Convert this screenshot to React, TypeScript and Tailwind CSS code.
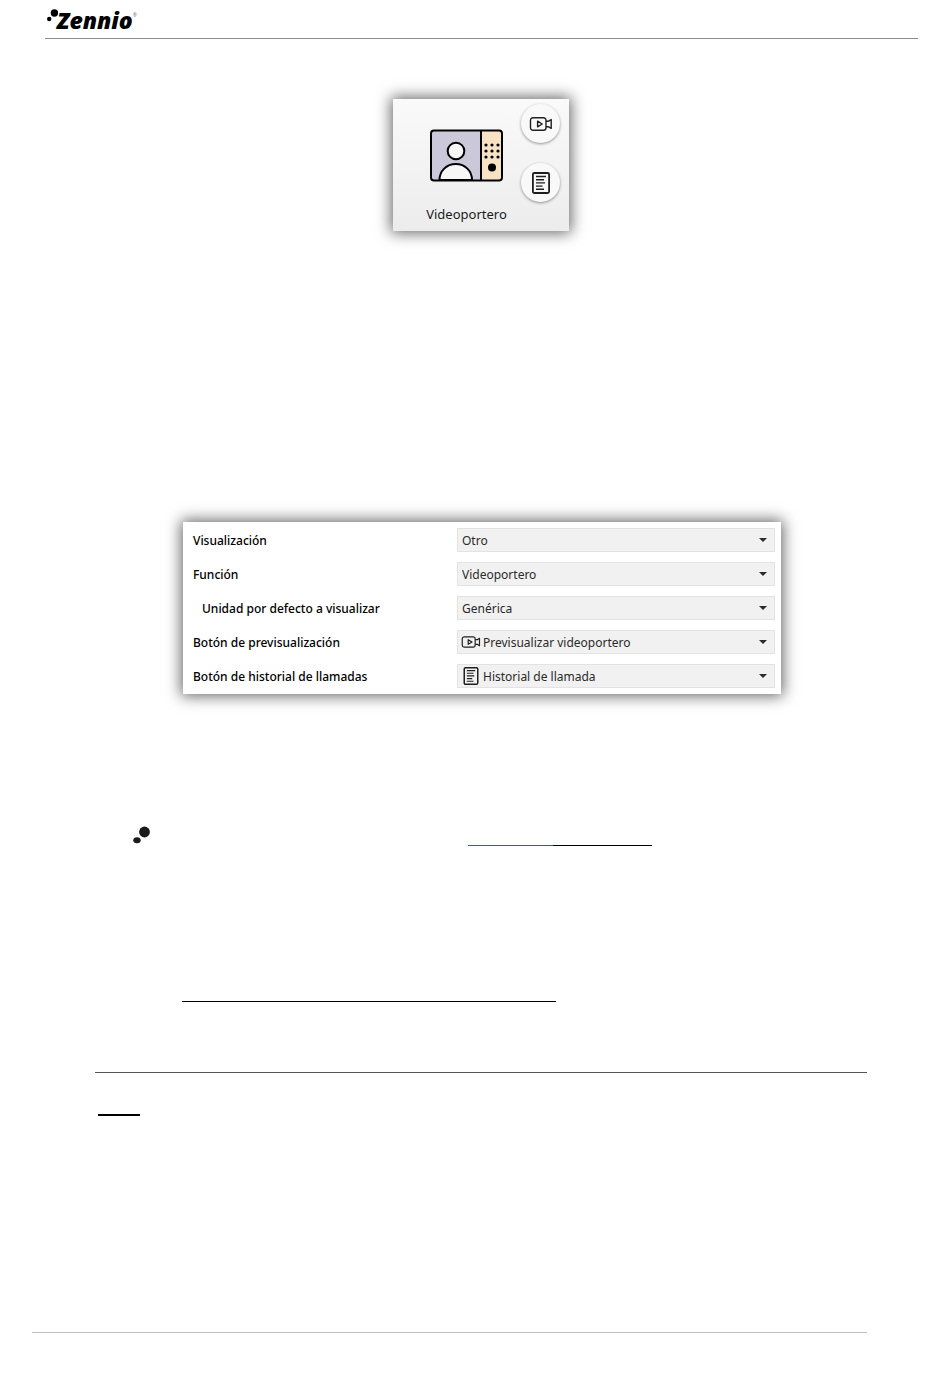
import { useId } from "react";
import type { ReactNode } from "react";

type Field = {
  label: string;
  value: string;
  nested?: boolean;
  icon?: ReactNode;
};

const FIELDS: Field[] = [
  { label: "Visualización", value: "Otro" },
  { label: "Función", value: "Videoportero" },
  { label: "Unidad por defecto a visualizar", value: "Genérica", nested: true },
  {
    label: "Botón de previsualización",
    value: "Previsualizar videoportero",
    icon: <CameraIcon className="h-4 w-5" />,
  },
  {
    label: "Botón de historial de llamadas",
    value: "Historial de llamada",
    icon: <HistoryIcon className="h-5 w-5" />,
  },
];

function CameraIcon({ className }: { className?: string }) {
  return (
    <svg
      viewBox="0 0 24 16"
      className={className}
      fill="none"
      stroke="#1f1f1f"
      strokeWidth="1.4"
      strokeLinejoin="round"
      aria-hidden="true"
    >
      <path d="M4 1.8h10.5a2.5 2.5 0 0 1 2.5 2.5v7.4a2.5 2.5 0 0 1-2.5 2.5H4a2.5 2.5 0 0 1-2.5-2.5V4.3A2.5 2.5 0 0 1 4 1.8Z" />
      <path d="M8.6 5.2v5.6L13.2 8Z" />
      <path d="M17 5.2h2.6l2.6-1.6v8.8l-2.6-1.6H17" />
    </svg>
  );
}

function HistoryIcon({ className }: { className?: string }) {
  return (
    <svg
      viewBox="0 0 24 24"
      className={className}
      fill="none"
      stroke="#1f1f1f"
      strokeWidth="1.4"
      aria-hidden="true"
    >
      <rect x="3.9" y="2" width="16.2" height="20" rx="1.5" strokeWidth="1.8" />
      <path d="M7 5.5h10M7 8.7h8M7 11.9h9M7 15.1h6.5M7 18.3h8" />
    </svg>
  );
}

function IntercomIcon() {
  return (
    <svg
      viewBox="0 0 73 53"
      className="h-[53px] w-[73px]"
      fill="none"
      stroke="#000"
      strokeWidth="2"
      role="img"
      aria-label="Videoportero"
    >
      <path d="M51 1.5H4a3 3 0 0 0-3 3V48a3 3 0 0 0 3 3h47Z" fill="#cac8d9" stroke="none" />
      <path d="M51 1.5h18a3 3 0 0 1 3 3V48a3 3 0 0 1-3 3H51Z" fill="#f7e3c4" stroke="none" />
      <path d="M9.5 51c0-9 7-16 16.3-16S42 42 42 51Z" fill="#f7f7f7" />
      <circle cx="26" cy="22" r="8.3" fill="#f7f7f7" />
      <path d="M51 1.5v49.5" />
      <rect x="1" y="1.5" width="71" height="50" rx="3" />
      <g fill="#000" stroke="none">
        <circle cx="56" cy="16" r="1.6" />
        <circle cx="62" cy="16" r="1.6" />
        <circle cx="68" cy="16" r="1.6" />
        <circle cx="56" cy="22" r="1.6" />
        <circle cx="62" cy="22" r="1.6" />
        <circle cx="68" cy="22" r="1.6" />
        <circle cx="56" cy="28" r="1.6" />
        <circle cx="62" cy="28" r="1.6" />
        <circle cx="68" cy="28" r="1.6" />
        <circle cx="62" cy="38.5" r="4" />
      </g>
    </svg>
  );
}

function Logo() {
  return (
    <div className="flex h-[38px] items-start pt-2 text-black">
      <svg viewBox="0 0 12 16" className="h-4 w-3 overflow-visible" aria-hidden="true">
        <circle cx="4.2" cy="11" r="2.2" />
        <circle cx="9.4" cy="5" r="3.7" />
      </svg>
      <span className="font-['Open_Sans'] text-[23px] leading-6 font-extrabold italic">
        Zennio
      </span>
      <span className="pt-1 font-['Open_Sans'] text-[5px] leading-[6px] text-gray-500">®</span>
    </div>
  );
}

function RoundButton({ label, children }: { label: string; children: ReactNode }) {
  return (
    <button
      type="button"
      aria-label={label}
      className="flex size-[39px] items-center justify-center rounded-full bg-[#f9f9f9] shadow-[0_1px_3px_rgba(0,0,0,0.4)]"
    >
      {children}
    </button>
  );
}

function DeviceCard() {
  return (
    <section className="mx-auto flex h-[132px] w-[176px] bg-linear-to-b from-[#fafafa] to-[#ececec] pl-8 shadow-[0_0_14px_2px_rgba(0,0,0,0.6)]">
      <div className="flex w-[83px] flex-col items-center pt-[30px]">
        <IntercomIcon />
        <p className="mt-5 font-['Noto_Sans'] text-[13px] leading-6 text-[#1a1a1a]">
          Videoportero
        </p>
      </div>
      <div className="flex flex-col gap-5 pt-[5px] pl-[13px]">
        <RoundButton label="Previsualizar videoportero">
          <CameraIcon className="h-4 w-6" />
        </RoundButton>
        <RoundButton label="Historial de llamada">
          <HistoryIcon className="size-6" />
        </RoundButton>
      </div>
    </section>
  );
}

function FieldRow({ label, value, nested, icon }: Field) {
  const id = useId();
  return (
    <div className="flex h-6 items-center">
      <label
        htmlFor={id}
        className={`flex-1 pt-[2px] text-xs leading-6 font-medium text-black ${nested ? "pl-[9px]" : ""}`}
      >
        {label}
      </label>
      <div className="relative h-6 w-[318px]">
        <select
          id={id}
          className={`block h-6 w-full appearance-none border border-[#e3e3e3] bg-[#f1f1f1] pt-[2px] pr-6 text-xs leading-5 text-[#2a2a2a] ${icon ? "pl-[25px]" : "pl-1"}`}
        >
          <option>{value}</option>
        </select>
        {icon && (
          <span className="pointer-events-none absolute inset-y-0 left-1 flex items-center">
            {icon}
          </span>
        )}
        <svg
          viewBox="0 0 8 4"
          className="pointer-events-none absolute top-[10px] right-2 h-1 w-2"
          fill="#2a2a2a"
          aria-hidden="true"
        >
          <path d="M0 0h8L4 4Z" />
        </svg>
      </div>
    </div>
  );
}

export default function App() {
  return (
    <div className="bg-white pb-[54px] font-['Noto_Sans',sans-serif]">
      <header className="mr-8 ml-[45px] border-b border-[#8c8c8c]">
        <Logo />
      </header>

      <main className="mr-[83px] ml-[95px] pt-[60px]">
        <DeviceCard />

        <form className="mt-[291px] mr-[86px] ml-[88px] flex flex-col gap-[10px] bg-white py-[6px] pr-[6px] pl-[10px] shadow-[0_0_14px_2px_rgba(0,0,0,0.6)]">
          {FIELDS.map((field) => (
            <FieldRow key={field.label} {...field} />
          ))}
        </form>

        <div className="mt-[131px] flex h-[21px] items-end pl-[38px]">
          <svg viewBox="0 0 18 20" className="h-5 w-[18px]" fill="#1a1a1a" aria-hidden="true">
            <circle cx="11.5" cy="6" r="5.4" />
            <ellipse cx="4" cy="14.2" rx="3.7" ry="3" />
          </svg>
          <div className="ml-[317px] w-[85px] border-b border-[#0070c0]" />
          <div className="w-[99px] border-b border-black" />
        </div>

        <div className="mt-[155px] ml-[87px] w-[374px] border-b border-black" />
        <hr className="mt-[70px] border-[#555]" />
        <div className="mt-[41px] ml-[3px] w-[42px] border-b-2 border-black" />
      </main>

      <footer className="mt-[216px] mr-[83px] ml-8 border-t border-[#bfbfbf]" />
    </div>
  );
}
